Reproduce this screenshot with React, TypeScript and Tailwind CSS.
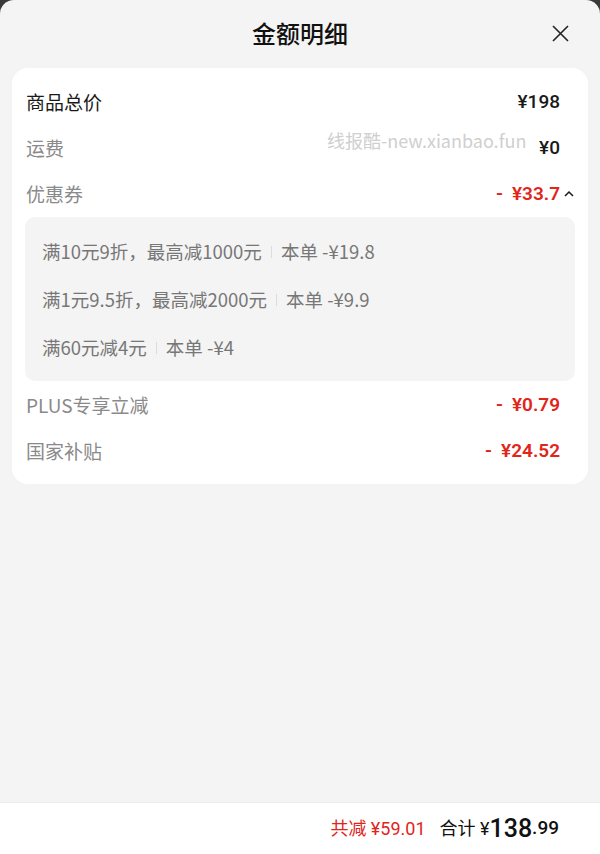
import React from "react";

const cjk = { fontFamily: "'Noto Sans CJK SC', 'Noto Sans', sans-serif" };
const num = { fontFamily: "Roboto, 'Noto Sans CJK SC', sans-serif" };

function Row({ label, value, dark, red, caret }: { label: string; value: string; dark?: boolean; red?: boolean; caret?: boolean }) {
  return (
    <div className="flex h-[46px] items-center justify-between pl-[14px] pr-[28px] relative">
      <span className={`text-[19px] ${dark ? "text-[#1a1a1a]" : "text-[#8a8a8a]"}`} style={cjk}>{label}</span>
      <span className={`relative z-10 flex items-center text-[19px] ${red ? "text-[#e1251b] font-semibold" : "text-[#1a1a1a] font-medium"}`} style={num}>
        {red && <span className="mr-[9px]">-</span>}
        <span>{value}</span>
        {caret && (
          <svg className="absolute left-full top-1/2 -translate-y-1/2 ml-[3px]" width="12" height="12" viewBox="0 0 12 12" fill="none">
            <path d="M2 8 L6 4 L10 8" stroke="#1a1a1a" strokeWidth="1.5" />
          </svg>
        )}
      </span>
    </div>
  );
}

function Coupon({ left, right }: { left: string; right: string }) {
  return (
    <div className="flex h-[48px] items-center text-[18.5px] text-[#777]" style={cjk}>
      <span>{left}</span>
      <span className="mx-[9px] h-[12px] w-px bg-[#dcdcdc]" />
      <span>{right}</span>
    </div>
  );
}

export default function App() {
  return (
    <div className="w-[600px] h-[854px] bg-[#3a3a3a] overflow-hidden">
      <div className="flex h-full flex-col rounded-t-[14px] bg-[#f4f4f4]">
        <div className="relative flex h-[66px] items-center justify-center">
          <span className="text-[24px] font-medium text-[#111]" style={cjk}>金额明细</span>
          <svg className="absolute right-[31px] top-[25px]" width="17" height="17" viewBox="0 0 17 17" fill="none">
            <path d="M1 1 L16 16 M16 1 L1 16" stroke="#222" strokeWidth="1.6" />
          </svg>
        </div>
        <div className="relative mx-[12px] mt-[2px] rounded-[16px] bg-white pt-[11px] pb-[10px]">
          <Row label="商品总价" value="¥198" dark />
          <Row label="运费" value="¥0" />
          <Row label="优惠券" value="¥33.7" red caret />
          <div className="mx-[13px] rounded-[10px] bg-[#f4f4f4] pl-[17px] pt-[11px] pb-[9px]">
            <Coupon left="满10元9折，最高减1000元" right="本单 -¥19.8" />
            <Coupon left="满1元9.5折，最高减2000元" right="本单 -¥9.9" />
            <Coupon left="满60元减4元" right="本单 -¥4" />
          </div>
          <div className="h-px" />
          <Row label="PLUS专享立减" value="¥0.79" red />
          <Row label="国家补贴" value="¥24.52" red />
          <span className="pointer-events-none absolute left-[315px] top-[59px] whitespace-nowrap text-[18px] text-[#cfcfcf]" style={cjk}>线报酷-new.xianbao.fun</span>
        </div>
        <div className="flex-1" />
        <div className="flex h-[52px] items-center justify-end border-t border-[#ececec] bg-white pr-[41px]">
          <span className="text-[18px] text-[#e1251b]" style={num}>共减 ¥59.01</span>
          <span className="ml-[14px] text-[18px] text-[#111]" style={num}>合计 ¥</span>
          <span className="text-[25px] font-medium text-[#111]" style={num}>138</span>
          <span className="text-[19px] font-medium text-[#111]" style={num}>.99</span>
        </div>
      </div>
    </div>
  );
}
